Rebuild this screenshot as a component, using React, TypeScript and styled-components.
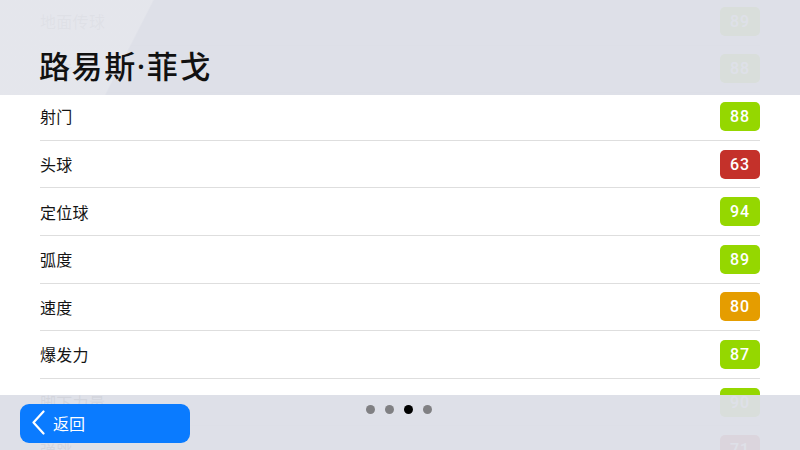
import styled, { createGlobalStyle } from "styled-components";

interface IStat {
  label: string;
  value: number;
}

const GlobalStyle = createGlobalStyle`
  html, body {
    margin: 0;
    padding: 0;
    background: #ffffff;
  }
  body {
    font-family: "Noto Sans CJK SC", "Noto Sans", sans-serif;
    overflow: hidden;
  }
`;

const Screen = styled.div`
  position: relative;
  width: 800px;
  height: 450px;
  overflow: hidden;
  background: #ffffff;
`;

const List = styled.ul`
  list-style: none;
  margin: -2px 0 0;
  padding: 0 40px;
`;

const Row = styled.li`
  display: flex;
  align-items: center;
  justify-content: space-between;
  height: 46.6px;
  border-bottom: 1px solid #dedede;
`;

const Label = styled.span`
  font-size: 16px;
  color: #141414;
  letter-spacing: 0.3px;
`;

const Badge = styled.span<{ $tone: string }>`
  display: grid;
  place-items: center;
  width: 40px;
  height: 29px;
  border-radius: 5px;
  background: ${(props) => props.$tone};
  color: #ffffff;
  font-family: Roboto, "Liberation Sans", sans-serif;
  font-weight: 500;
  font-size: 16px;
  letter-spacing: 0.8px;
`;

const Header = styled.header`
  position: absolute;
  top: 0;
  left: 0;
  right: 0;
  height: 95px;
  display: flex;
  align-items: flex-end;
  padding: 0 40px 13px;
  box-sizing: border-box;
  background:
    radial-gradient(ellipse 260px 190px at 1000px -30px, rgba(200, 202, 212, 0.35) 70%, rgba(200, 202, 212, 0) 71%),
    linear-gradient(117deg, rgba(235, 236, 240, 0.5) 0, rgba(235, 236, 240, 0.5) 18%, rgba(235, 236, 240, 0) 18.2%),
    rgba(220, 222, 231, 0.95);
`;

const Title = styled.h1`
  margin: 0 0 0 -1px;
  font-family: "Noto Sans", "Noto Sans CJK SC", sans-serif;
  font-size: 31px;
  line-height: 31px;
  font-weight: 500;
  color: #111111;
  letter-spacing: 1.6px;
`;

const Footer = styled.footer`
  position: absolute;
  left: 0;
  right: 0;
  bottom: 0;
  height: 55px;
  display: grid;
  grid-template-columns: 1fr auto 1fr;
  align-items: start;
  padding: 9px 20px 0;
  box-sizing: border-box;
  background: rgba(220, 222, 231, 0.95);
`;

const BackButton = styled.button`
  display: flex;
  align-items: center;
  gap: 8px;
  width: 170px;
  height: 39px;
  padding: 0 0 2px 12px;
  border: none;
  border-radius: 9px;
  background: #0a7bff;
  color: #ffffff;
  font-family: "Noto Sans CJK SC", sans-serif;
  font-size: 16px;
  cursor: pointer;
`;

const Dots = styled.div`
  display: flex;
  gap: 10px;
  padding-top: 0.5px;
  margin-left: -2px;
`;

const Dot = styled.span<{ $active?: boolean }>`
  width: 9px;
  height: 9px;
  border-radius: 50%;
  background: ${(props) => (props.$active ? "#000000" : "#808083")};
`;

const toneFor = (value: number) => {
  if (value >= 85) return "#95d700";
  if (value >= 75) return "#e59d00";
  return "#c4312a";
};

const stats: IStat[] = [
  { label: "地面传球", value: 89 },
  { label: "长传", value: 88 },
  { label: "射门", value: 88 },
  { label: "头球", value: 63 },
  { label: "定位球", value: 94 },
  { label: "弧度", value: 89 },
  { label: "速度", value: 80 },
  { label: "爆发力", value: 87 },
  { label: "脚下力量", value: 90 },
  { label: "弹跳", value: 71 },
];

function App() {
  return (
    <Screen>
      <GlobalStyle />
      <List>
        {stats.map((stat) => (
          <Row key={stat.label}>
            <Label>{stat.label}</Label>
            <Badge $tone={toneFor(stat.value)}>{stat.value}</Badge>
          </Row>
        ))}
      </List>
      <Header>
        <Title>路易斯·菲戈</Title>
      </Header>
      <Footer>
        <BackButton>
          <svg width="13" height="25" viewBox="0 0 13 25" fill="none">
            <polyline
              points="11.5,1.5 1.5,12.5 11.5,23.5"
              stroke="#ffffff"
              strokeWidth="2.2"
              strokeLinecap="round"
              strokeLinejoin="round"
            />
          </svg>
          返回
        </BackButton>
        <Dots>
          <Dot />
          <Dot />
          <Dot $active />
          <Dot />
        </Dots>
      </Footer>
    </Screen>
  );
}

export default App;
